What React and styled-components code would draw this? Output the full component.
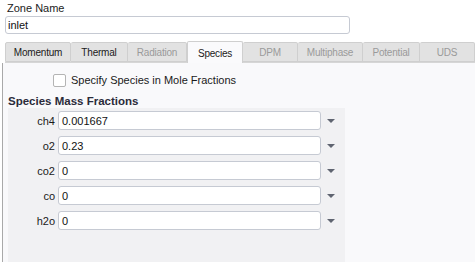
import styled, { createGlobalStyle } from "styled-components";

const GlobalStyle = createGlobalStyle`
  * { margin: 0; padding: 0; box-sizing: border-box; }
  html, body { background: #ffffff; }
  body {
    font-family: "Liberation Sans", Arial, sans-serif;
    font-size: 11px;
    color: #1a1a1a;
    overflow: hidden;
  }
`;

const Page = styled.div`
  width: 475px;
  height: 262px;
  display: flex;
  flex-direction: column;
`;

const ZoneLabel = styled.div`
  margin: 2px 0 0 7px;
  height: 14px;
  line-height: 13px;
  font-size: 11px;
  color: #222;
`;

const TextBox = styled.div`
  height: ${(p) => p.$h || 19}px;
  width: ${(p) => p.$w}px;
  border: 1px solid #c6cad3;
  border-radius: 3px;
  background: #fff;
  padding-left: ${(p) => p.$pad || 3}px;
  display: flex;
  align-items: center;
  font-size: 11px;
  color: #111;
`;

const ZoneBox = styled(TextBox)`
  margin-left: 5px;
`;

const TabRow = styled.div`
  display: flex;
  margin: 8px 0 0 5px;
  height: 21px;
  align-items: flex-end;
  border-bottom: 1px solid #d6d6d6;
`;

const Tab = styled.div`
  width: ${(p) => p.$w}px;
  height: ${(p) => (p.$active ? 22 : 20)}px;
  margin-bottom: ${(p) => (p.$active ? -1 : 0)}px;
  display: flex;
  align-items: center;
  justify-content: center;
  font-size: 10px;
  letter-spacing: -0.2px;
  background: ${(p) => (p.$active ? "#fafafc" : "#e2e2e2")};
  border: 1px solid #cfcfcf;
  border-bottom: ${(p) => (p.$active ? "none" : "1px solid #cfcfcf")};
  border-left: ${(p) => (p.$first || p.$active ? "1px solid #cfcfcf" : "none")};
  border-radius: 2px 2px 0 0;
  color: ${(p) => (p.$disabled ? "#9a9a9a" : "#1a1a1a")};
  padding-top: ${(p) => (p.$active ? 1 : 0)}px;
`;

const Panel = styled.div`
  flex: 1;
  margin-left: 2px;
  border-left: 1px solid #a9a9a9;
  background: #f9f9fb;
  display: flex;
  flex-direction: column;
  min-height: 0;
`;

const CheckRow = styled.label`
  display: flex;
  align-items: center;
  gap: 5px;
  margin: 10px 0 0 50px;
  height: 14px;
  font-size: 11px;
  color: #1a1a1a;
`;

const CheckBox = styled.span`
  width: 13px;
  height: 13px;
  border: 1px solid #b4b4b4;
  border-radius: 2px;
  background: #fff;
`;

const GroupTitle = styled.div`
  margin: 7px 0 0 5px;
  height: 14px;
  line-height: 14px;
  font-weight: bold;
  font-size: 11.5px;
  color: #2b2b3a;
`;

const Group = styled.div`
  flex: 1;
  width: 337px;
  margin: 0 0 0 5px;
  background: #f1f1f3;
  padding-top: 3px;
  display: flex;
  flex-direction: column;
  gap: 6px;
`;

const Row = styled.div`
  display: flex;
  align-items: center;
  height: 19px;
`;

const RowLabel = styled.div`
  width: 47px;
  text-align: right;
  margin-right: 3px;
  font-size: 11px;
  color: #1a1a1a;
`;

const Arrow = styled.svg`
  margin-left: 6px;
`;

const tabs = [
  { name: "Momentum", w: 66 },
  { name: "Thermal", w: 57 },
  { name: "Radiation", w: 59, disabled: true },
  { name: "Species", w: 56, active: true },
  { name: "DPM", w: 55, disabled: true },
  { name: "Multiphase", w: 65, disabled: true },
  { name: "Potential", w: 57, disabled: true },
  { name: "UDS", w: 55, disabled: true },
];

const species = [
  { name: "ch4", value: "0.001667" },
  { name: "o2", value: "0.23" },
  { name: "co2", value: "0" },
  { name: "co", value: "0" },
  { name: "h2o", value: "0" },
];

export default function App() {
  return (
    <>
      <GlobalStyle />
      <Page>
        <ZoneLabel>Zone Name</ZoneLabel>
        <ZoneBox $w={345} $h={18} $pad={2}>inlet</ZoneBox>
        <TabRow>
          {tabs.map((t, i) => (
            <Tab key={t.name} $w={t.w} $active={t.active} $disabled={t.disabled} $first={i === 0}>
              {t.name}
            </Tab>
          ))}
        </TabRow>
        <Panel>
          <CheckRow>
            <CheckBox />
            Specify Species in Mole Fractions
          </CheckRow>
          <GroupTitle>Species Mass Fractions</GroupTitle>
          <Group>
            {species.map((s) => (
              <Row key={s.name}>
                <RowLabel>{s.name}</RowLabel>
                <TextBox $w={263}>{s.value}</TextBox>
                <Arrow width="8" height="4" viewBox="0 0 8 4">
                  <path d="M0 0H8L4 4Z" fill="#5f6470" />
                </Arrow>
              </Row>
            ))}
          </Group>
        </Panel>
      </Page>
    </>
  );
}
